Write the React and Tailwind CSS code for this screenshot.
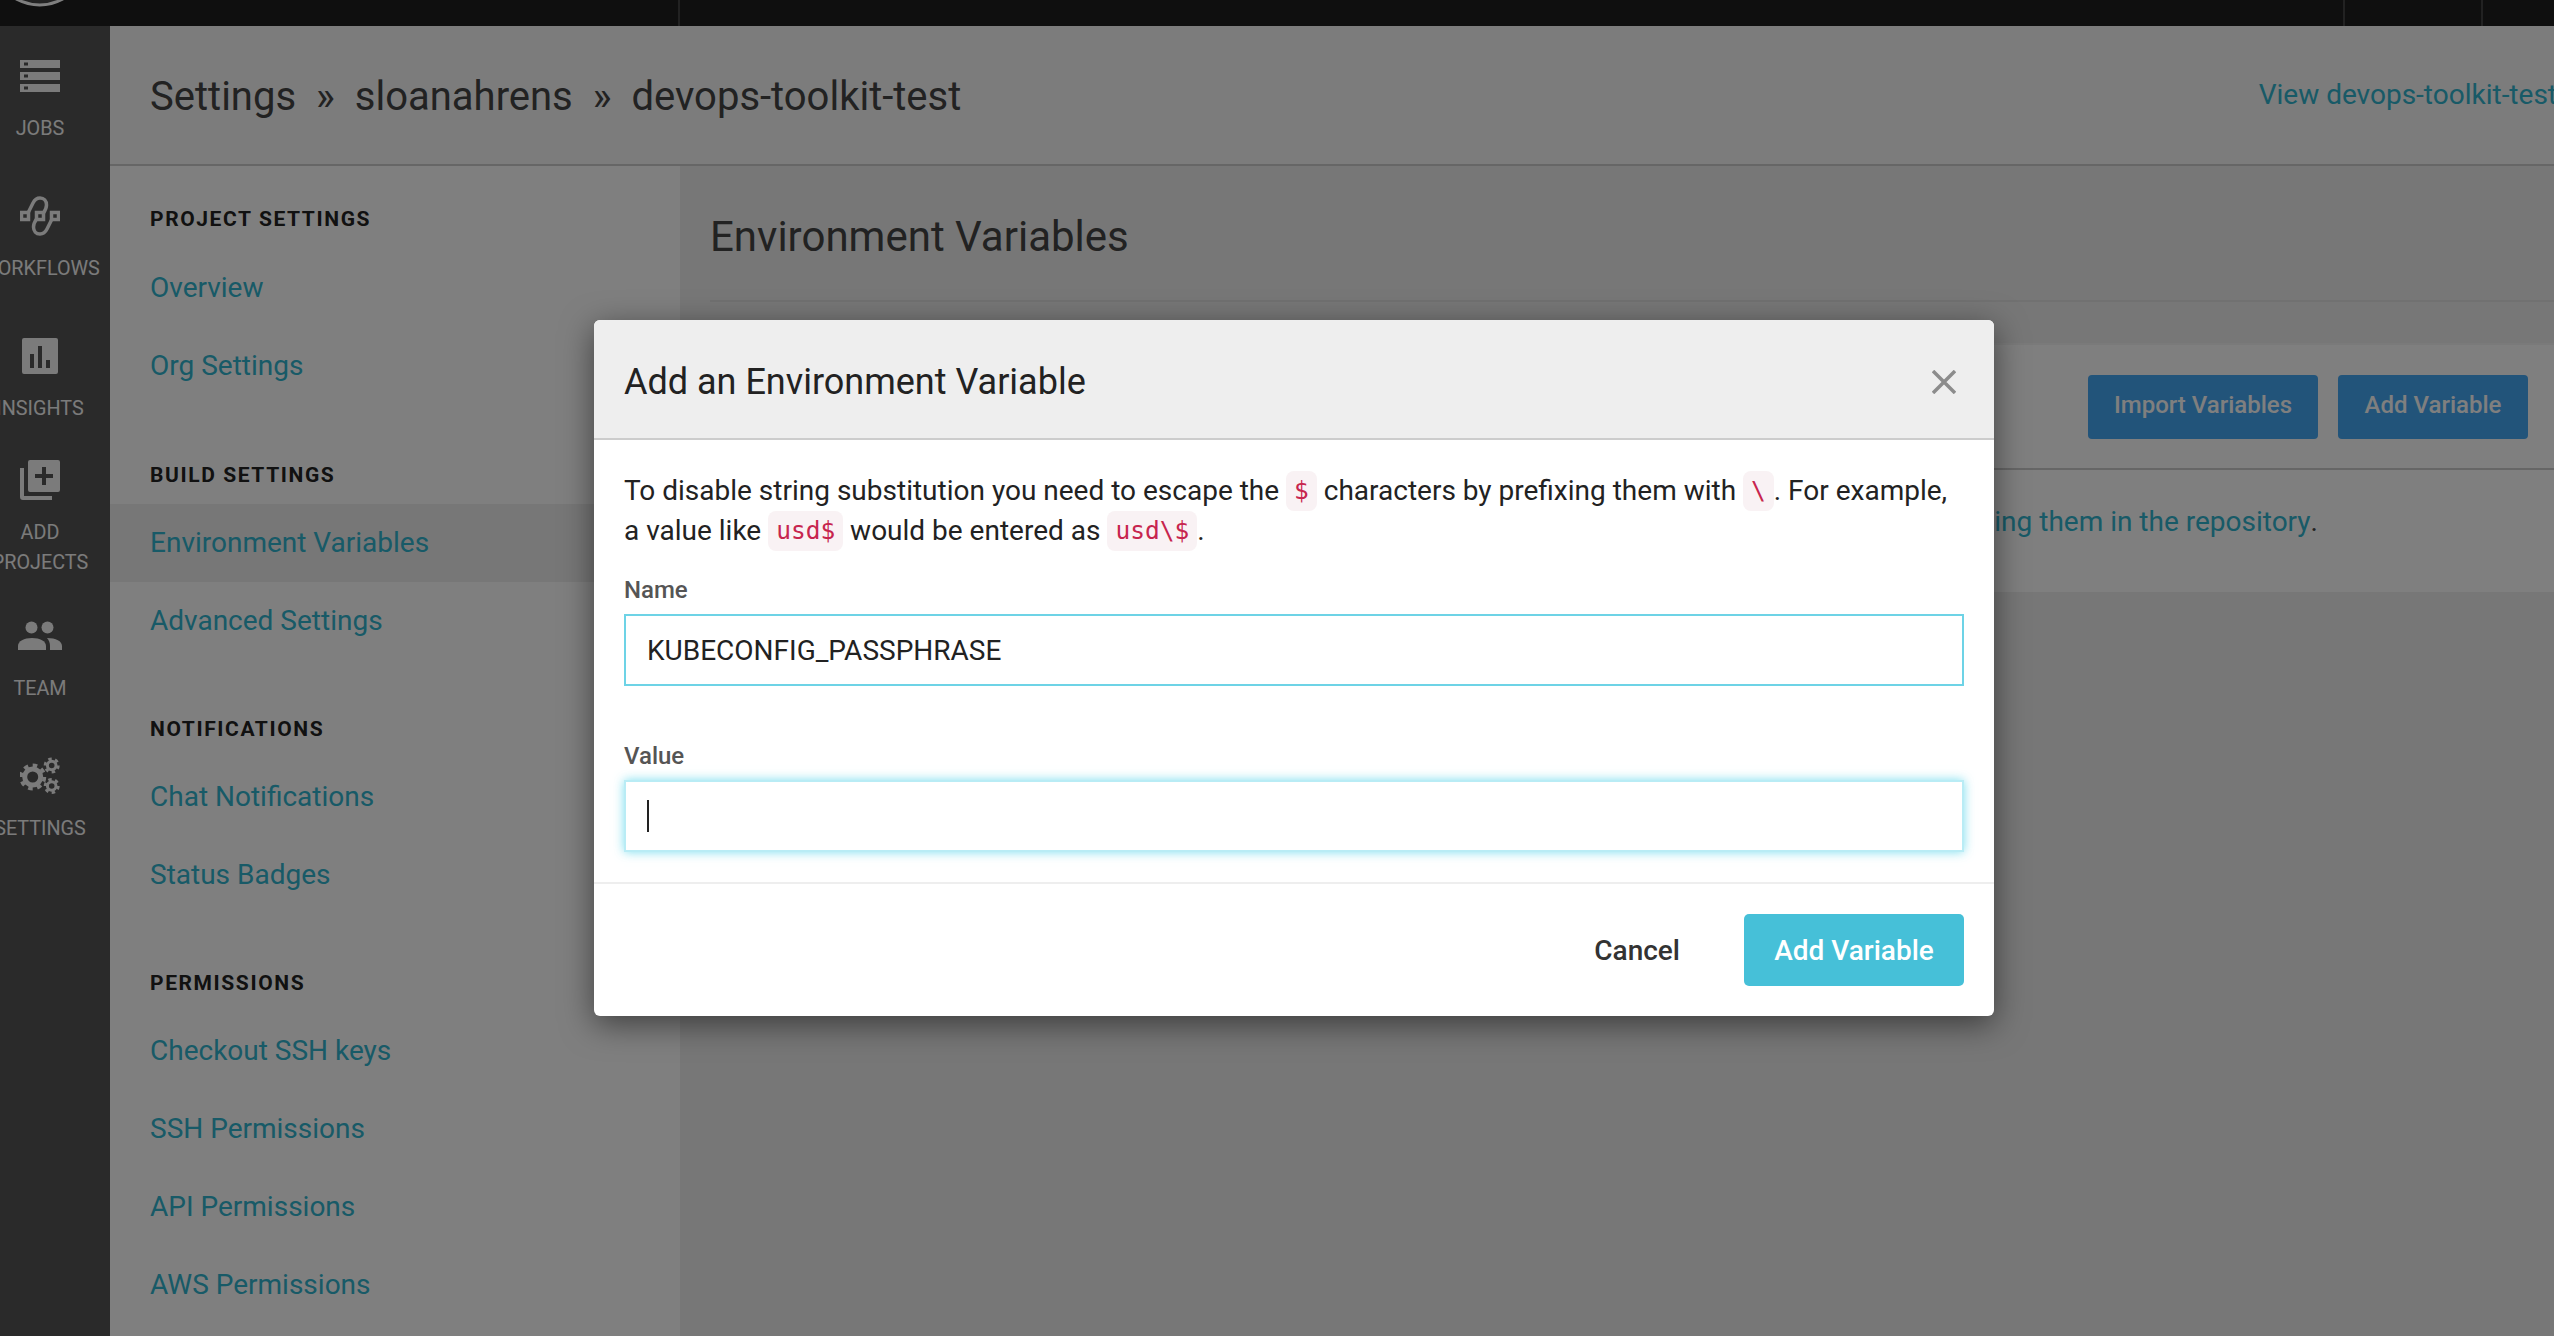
import React from "react";

const font = { fontFamily: "Roboto, sans-serif" };

function Gear({ cx, cy, r, hole, teeth, tooth }) {
  const body = r - tooth;
  const mid = (body + hole) / 2;
  return (
    <g fill="none" stroke="currentColor">
      <circle cx={cx} cy={cy} r={mid} strokeWidth={body - hole} />
      <circle cx={cx} cy={cy} r={body + tooth / 2 - 0.3} strokeWidth={tooth + 0.6} pathLength={teeth * 2} strokeDasharray="1 1" />
    </g>
  );
}

const icons = {
  jobs: (
    <svg width="40" height="40" viewBox="0 0 40 40" fill="currentColor" fillRule="evenodd">
      <path d="M0 4h40v8H0zM4 6.500v3h4v-3z" />
      <path d="M0 16h40v8H0zM4 18.500v3h4v-3z" />
      <path d="M0 28h40v8H0zM4 30.500v3h4v-3z" />
    </svg>
  ),
  workflows: (
    <svg width="40" height="40" viewBox="0 0 40 40" fill="none" stroke="currentColor">
      <rect x="1.500" y="16.500" width="7" height="7" strokeWidth="3.500" />
      <rect x="16.500" y="16.500" width="7" height="7" strokeWidth="3.500" />
      <rect x="31.500" y="16.500" width="7" height="7" strokeWidth="3.500" />
      <path d="M8.500 16 L13 7 C15 3 17.500 2 20 2 C24 2 26.500 5 26.500 9 C26.500 12 25.500 14 23.500 17" strokeWidth="3.500" />
      <path d="M31.500 24 L27 33 C25 37 22.500 38 20 38 C16 38 13.500 35 13.500 31 C13.500 28 14.500 26 16.500 23" strokeWidth="3.500" />
    </svg>
  ),
  insights: (
    <svg width="40" height="40" viewBox="0 0 40 40" fill="currentColor" fillRule="evenodd">
      <path d="M4 2h32a2 2 0 0 1 2 2v32a2 2 0 0 1-2 2H4a2 2 0 0 1-2-2V4a2 2 0 0 1 2-2z M10 18v14h4V18z M18 10v22h4V10z M26 24v8h4v-8z" />
    </svg>
  ),
  add: (
    <svg width="40" height="40" viewBox="0 0 40 40" fill="currentColor" fillRule="evenodd">
      <path d="M0 8h4v28h28v4H3a3 3 0 0 1-3-3z" />
      <path d="M10 0h28a2 2 0 0 1 2 2v28a2 2 0 0 1-2 2H10a2 2 0 0 1-2-2V2a2 2 0 0 1 2-2z M22 7v7h-7v4h7v7h4v-7h7v-4h-7V7z" />
    </svg>
  ),
  team: (
    <svg width="44" height="40" viewBox="0 0 44 40" fill="currentColor">
      <circle cx="13.500" cy="11.500" r="6" />
      <circle cx="29.500" cy="11.500" r="6" />
      <path d="M0 34v-4c0-5 6-8 14-8s14 3 14 8v4z" />
      <path d="M29 22c9 0 15 3 15 8v4H32v-4c0-3-1-6-3-8z" />
    </svg>
  ),
  settings: (
    <svg width="40" height="40" viewBox="0 0 40 40">
      <Gear cx={12.700} cy={21} r={13.500} hole={5.500} teeth={8} tooth={3} />
      <Gear cx={31.700} cy={9.500} r={8} hole={2.800} teeth={6} tooth={2.200} />
      <Gear cx={31.700} cy={30} r={8} hole={2.800} teeth={6} tooth={2.200} />
    </svg>
  ),
};

const navItems = [
  { icon: "jobs", label: ["JOBS"], box: "h-[140px] pt-[30px]" },
  { icon: "workflows", label: ["WORKFLOWS"], box: "h-[140px] pt-[30px]" },
  { icon: "insights", label: ["INSIGHTS"], box: "h-[124px] pt-[30px]" },
  { icon: "add", label: ["ADD", "PROJECTS"], box: "h-[156px] pt-[30px]" },
  { icon: "team", label: ["TEAM"], box: "h-[140px] pt-[30px]" },
  { icon: "settings", label: ["SETTINGS"], box: "h-[140px] pt-[30px]" },
];

const sections = [
  { title: "PROJECT SETTINGS", links: ["Overview", "Org Settings"], gap: "mb-[60px]", head: "mb-[20px]" },
  { title: "BUILD SETTINGS", links: ["Environment Variables", "Advanced Settings"], gap: "mb-[59px]", head: "mb-[19px]" },
  { title: "NOTIFICATIONS", links: ["Chat Notifications", "Status Badges"], gap: "mb-[59px]", head: "mb-[19px]" },
  { title: "PERMISSIONS", links: ["Checkout SSH keys", "SSH Permissions", "API Permissions", "AWS Permissions"], gap: "mb-[59px]", head: "mb-[19px]" },
];

function Code({ children }) {
  return (
    <code className="inline-block h-[40px] rounded-[8px] bg-[#f9f2f4] px-[8px] align-top text-[24.500px] leading-[40px] text-[#c7254e]" style={{ fontFamily: '"DejaVu Sans Mono", monospace' }}>
      {children}
    </code>
  );
}

export default function App() {
  return (
    <div className="relative flex h-[1336px] w-[2554px] flex-col overflow-hidden bg-white" style={font}>
      {/* top bar */}
      <div className="relative flex h-[26px] shrink-0 bg-[#1e1e1e]">
        <svg className="absolute left-[10px] top-0" width="60" height="10" viewBox="0 0 60 10" fill="none">
          <path d="M6 -1 Q30 11 53 -1" fill="#444" stroke="#ffffff" strokeWidth="3" />
        </svg>
        <div className="ml-[678px] w-[2px] bg-[#444]" />
        <div className="ml-[1663px] w-[2px] bg-[#444]" />
        <div className="ml-[136px] w-[2px] bg-[#444]" />
      </div>

      <div className="flex min-h-0 flex-1">
        {/* icon rail */}
        <aside className="flex w-[110px] shrink-0 flex-col bg-[#545454]">
          {navItems.map((item) => (
            <div key={item.icon} className={`flex w-[80px] flex-col items-center text-[#f6f6f6] ${item.box}`}>
              <div className="flex h-[40px] items-center justify-center">{icons[item.icon]}</div>
              <div className="mt-[18px] flex flex-col items-center text-[19.800px] leading-[30px]">
                {item.label.map((l) => (
                  <span key={l} className="whitespace-nowrap">{l}</span>
                ))}
              </div>
            </div>
          ))}
        </aside>

        <div className="flex min-w-0 flex-1 flex-col">
          {/* breadcrumb */}
          <header className="flex h-[140px] shrink-0 items-center justify-between border-b-2 border-[#cccccc] bg-[#f8f8f8] pl-[40px]">
            <div className="mt-[4px] flex items-center gap-[20px] text-[40px] text-[#444444]">
              <span>Settings</span>
              <span>»</span>
              <span>sloanahrens</span>
              <span>»</span>
              <span>devops-toolkit-test</span>
            </div>
            <a className="-mr-[3px] whitespace-nowrap text-[28px] text-[#30b4ce]">View devops-toolkit-test</a>
          </header>

          <div className="flex min-h-0 flex-1">
            {/* settings menu */}
            <nav className="w-[570px] shrink-0 bg-white pt-[43px]">
              {sections.map((s) => (
                <div key={s.title}>
                  <h3 className={`h-[20px] pl-[40px] text-[21px] font-bold leading-[20px] tracking-[1.600px] text-[#222222] ${s.head}`}>{s.title}</h3>
                  <ul className={s.gap}>
                    {s.links.map((l) => (
                      <li key={l} className={`flex h-[78px] items-center pl-[40px] text-[28px] text-[#30b4ce] ${l === "Environment Variables" ? "bg-[#eeeeee]" : ""}`}>
                        {l}
                      </li>
                    ))}
                  </ul>
                </div>
              ))}
            </nav>

            {/* main */}
            <main className="min-w-0 flex-1 bg-[#eeeeee] pl-[30px]">
              <div className="flex h-[136px] items-center border-b-2 border-[#e2e2e2] pt-[7px] text-[42px] text-[#444444]">Environment Variables</div>
              <section className="mt-[41px] h-[249px] border-t-2 border-[#f4f4f4] bg-white">
                <div className="flex h-[125px] items-center justify-end gap-[20px] border-b-2 border-[#cccccc] pr-[26px]">
                  <button className="h-[64px] w-[230px] rounded-[4px] bg-[#44a8f4] pb-[4px] text-[24px] font-medium text-white">Import Variables</button>
                  <button className="h-[64px] w-[190px] rounded-[4px] bg-[#44a8f4] pb-[4px] text-[24px] font-medium text-white">Add Variable</button>
                </div>
                <p className="flex h-[103px] items-center justify-end pr-[236px] text-[28px] text-[#444444]">
                  <span className="text-[#30b4ce]">placing them in the repository</span>.
                </p>
              </section>
            </main>
          </div>
        </div>
      </div>

      {/* overlay + modal */}
      <div className="absolute inset-0 bg-black/50" />
      <div className="absolute left-[594px] top-[320px] flex h-[696px] w-[1400px] flex-col overflow-hidden rounded-[6px] bg-white shadow-[0_8px_32px_rgba(0,0,0,0.5)]">
        <div className="flex h-[120px] shrink-0 items-center justify-between border-b-2 border-[#cccccc] bg-[#eeeeee] pl-[30px] pr-[38px] pt-[6px]">
          <h2 className="text-[36px] leading-none text-[#222222]">Add an Environment Variable</h2>
          <svg width="24" height="24" viewBox="0 0 24 24" fill="none" stroke="#8c8c8c" strokeWidth="3.500">
            <path d="M1 1l22 22M23 1L1 23" />
          </svg>
        </div>
        <div className="flex-1 px-[30px]">
          <p className="mt-[31px] text-[28px] leading-[40px] text-[#222222]">
            To disable string substitution you need to escape the <Code>$</Code> characters by prefixing them with <Code>\</Code>. For example,
            <br />
            a value like <Code>usd$</Code> would be entered as <Code>usd\$</Code>.
          </p>
          <label className="mt-[19px] block h-[44px] text-[24px] font-medium leading-[40px] text-[#555555]">Name</label>
          <div className="flex h-[72px] items-center border-2 border-[#6dd3e6] pl-[21px] pt-[2px] text-[28px] text-[#222222]">KUBECONFIG_PASSPHRASE</div>
          <label className="mt-[50px] block h-[44px] text-[24px] font-medium leading-[40px] text-[#555555]">Value</label>
          <div className="flex h-[72px] items-center border-2 border-[#b9ecf5] pl-[21px] shadow-[0_0_10px_rgba(102,217,236,0.85)]">
            <span className="h-[32px] w-[2px] bg-[#222222]" />
          </div>
        </div>
        <div className="flex h-[134px] shrink-0 items-center justify-end gap-[64px] border-t-2 border-[#eeeeee] pr-[30px]">
          <button className="pt-[2px] text-[28px] font-medium text-[#333333]">Cancel</button>
          <button className="h-[72px] w-[220px] rounded-[5px] bg-[#46c0d8] pt-[2px] text-[28px] font-medium text-white">Add Variable</button>
        </div>
      </div>
    </div>
  );
}
